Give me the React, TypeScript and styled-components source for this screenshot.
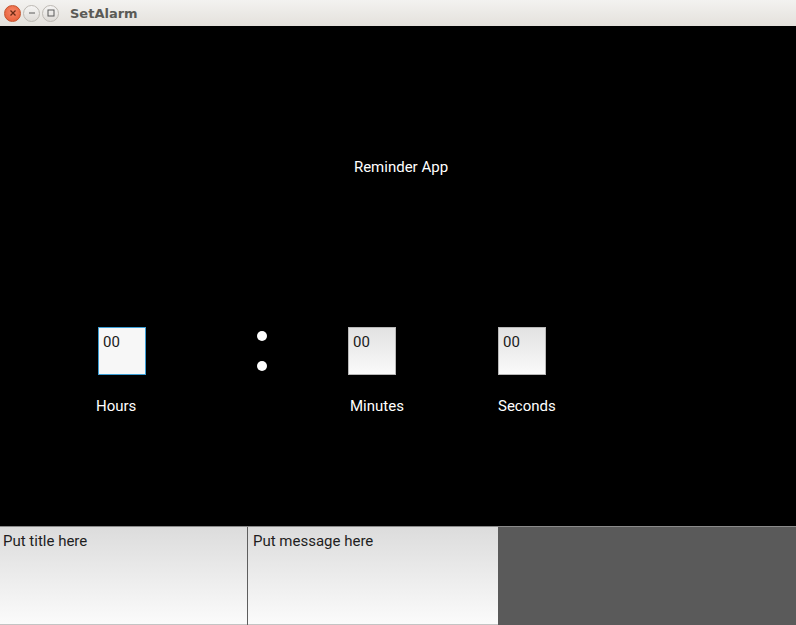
import React from "react";
import styled, { createGlobalStyle } from "styled-components";

const GlobalStyle = createGlobalStyle`
  html, body {
    margin: 0;
    padding: 0;
    background: #000;
  }
  body {
    font-family: Roboto, "Liberation Sans", sans-serif;
  }
`;

export default function App() {
  return (
    <>
      <GlobalStyle />
      <Window>
        <TitleBar>
          <WindowButtons>
            <CloseButton>
              <svg width="8" height="8" viewBox="0 0 8 8">
                <path d="M1.5 1.5 L6.5 6.5 M6.5 1.5 L1.5 6.5" stroke="#6a2a14" strokeWidth="1.3" />
              </svg>
            </CloseButton>
            <RoundButton>
              <svg width="8" height="8" viewBox="0 0 8 8">
                <path d="M1 4 H7" stroke="#5a5a5a" strokeWidth="1" />
              </svg>
            </RoundButton>
            <RoundButton>
              <svg width="8" height="8" viewBox="0 0 8 8">
                <rect x="1" y="1" width="6" height="6" fill="none" stroke="#5a5a5a" strokeWidth="1" />
              </svg>
            </RoundButton>
          </WindowButtons>
          <WindowTitle>SetAlarm</WindowTitle>
        </TitleBar>

        <Main>
          <Heading>Reminder App</Heading>
          <TimeGrid>
            <TimeBox $focused>00</TimeBox>
            <Colon>
              <Dot />
              <Dot />
            </Colon>
            <TimeBox>00</TimeBox>
            <TimeBox>00</TimeBox>

            <Label $shift={-2}>Hours</Label>
            <span />
            <Label $shift={2}>Minutes</Label>
            <Label $shift={0}>Seconds</Label>
          </TimeGrid>
        </Main>

        <Bottom>
          <Field $width={247} $pad={3}>Put title here</Field>
          <Divider />
          <Field $width={250} $pad={5}>Put message here</Field>
          <SidePanel />
        </Bottom>
      </Window>
    </>
  );
}

const Window = styled.div`
  width: 796px;
  height: 625px;
  display: flex;
  flex-direction: column;
  overflow: hidden;
`;

const TitleBar = styled.div`
  height: 26px;
  flex-shrink: 0;
  display: flex;
  align-items: center;
  background: linear-gradient(#f3f2f0, #e4e1dc);
  box-sizing: border-box;
`;

const WindowButtons = styled.div`
  display: flex;
  align-items: center;
  gap: 2px;
  padding-left: 4px;
`;

const RoundButton = styled.div`
  width: 17px;
  height: 17px;
  border-radius: 50%;
  box-sizing: border-box;
  border: 1px solid #bdb9b3;
  background: linear-gradient(#f6f5f4, #dedbd7);
  display: flex;
  align-items: center;
  justify-content: center;
`;

const CloseButton = styled(RoundButton)`
  border-color: #c4522c;
  background: radial-gradient(circle at 50% 40%, #f7896a, #e5572f);
`;

const WindowTitle = styled.div`
  margin-left: 11px;
  font-family: "DejaVu Sans", sans-serif;
  font-weight: bold;
  font-size: 13px;
  color: #5b5a56;
`;

const Main = styled.div`
  height: 500px;
  background: #000;
  display: flex;
  flex-direction: column;
`;

const Heading = styled.div`
  margin-top: 132px;
  text-align: center;
  color: #fff;
  font-size: 15px;
  line-height: 18px;
  padding-left: 6px;
`;

const TimeGrid = styled.div`
  margin-top: 151px;
  padding-left: 98px;
  display: grid;
  grid-template-columns: 150px 100px 150px 150px;
  grid-template-rows: 48px auto;
  row-gap: 22px;
`;

const TimeBox = styled.div<{ $focused?: boolean }>`
  width: 48px;
  height: 48px;
  box-sizing: border-box;
  border: 1px solid ${(p) => (p.$focused ? "#3c9fd6" : "#b8b8b8")};
  background: ${(p) =>
    p.$focused ? "#f7f7f7" : "linear-gradient(#e2e2e2, #fafafa)"};
  color: #1a1a1a;
  font-size: 15px;
  padding: 5px 0 0 4px;
  line-height: 18px;
`;

const Colon = styled.div`
  display: flex;
  flex-direction: column;
  gap: 20px;
  padding: 4px 0 0 9px;
`;

const Dot = styled.div`
  width: 10px;
  height: 10px;
  border-radius: 50%;
  background: #fff;
`;

const Label = styled.div<{ $shift: number }>`
  color: #fff;
  font-size: 15px;
  line-height: 18px;
  margin-left: ${(p) => p.$shift}px;
`;

const Bottom = styled.div`
  height: 99px;
  display: flex;
  border-top: 1px solid #8a8a8a;
  box-sizing: border-box;
`;

const Field = styled.div<{ $width: number; $pad: number }>`
  width: ${(p) => p.$width}px;
  flex-shrink: 0;
  box-sizing: border-box;
  background: linear-gradient(#dcdcdc, #fbfbfb);
  border-bottom: 1px solid #c4c4c4;
  color: #1e1e1e;
  font-size: 15px;
  line-height: 18px;
  padding: 5px 0 0 ${(p) => p.$pad}px;
`;

const Divider = styled.div`
  width: 1px;
  background: #5e5e5e;
`;

const SidePanel = styled.div`
  flex: 1;
  background: #5a5a5a;
`;
